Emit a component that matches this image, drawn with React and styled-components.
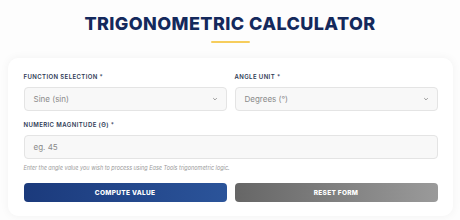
import styled, { createGlobalStyle } from "styled-components";

const GlobalStyle = createGlobalStyle`
  html, body {
    margin: 0;
    padding: 0;
    background: #fdfdfd;
    font-family: "Inter", "Open Sans", sans-serif;
  }
  * {
    box-sizing: border-box;
  }
`;

const Page = styled.div`
  width: 460px;
  height: 220px;
  padding: 0 8px;
  display: flex;
  flex-direction: column;
  align-items: center;
  overflow: hidden;
`;

const Title = styled.h1`
  margin: 12px 0 0;
  font-size: 18px;
  font-weight: 800;
  letter-spacing: 0.4px;
  color: #14295c;
  line-height: 24px;
`;

const Underline = styled.div`
  width: 39px;
  height: 2px;
  border-radius: 1px;
  background: #f6cd5c;
  margin-top: 5px;
`;

const Card = styled.div`
  width: 445px;
  margin-top: 15px;
  background: #ffffff;
  border-radius: 10px;
  box-shadow: 0 0 10px rgba(0, 0, 0, 0.05);
  padding: 14px 15px 14px 16px;
  display: flex;
  flex-direction: column;
`;

const Row = styled.div`
  display: grid;
  grid-template-columns: 1fr 1fr;
  gap: 8px;
`;

const Field = styled.div`
  display: flex;
  flex-direction: column;
  margin-top: ${(p) => (p.$spaced ? "9px" : "0")};
`;

const Label = styled.label`
  font-size: 6px;
  font-weight: 600;
  letter-spacing: 0.4px;
  text-transform: uppercase;
  color: #2e3a55;
  line-height: 10px;
  margin-bottom: 5px;
`;

const Box = styled.div`
  height: 24px;
  background: #f8f8f8;
  border: 1px solid #e4e4e4;
  border-radius: 4px;
  display: flex;
  align-items: center;
  justify-content: space-between;
  padding: 0 8px 0 9px;
  font-size: 8px;
  color: #8a8a8a;
`;

const Chevron = styled.svg`
  width: 6px;
  height: 6px;
`;

const Helper = styled.div`
  font-size: 5.5px;
  font-style: italic;
  color: #9a9a9a;
  margin-top: 5px;
  line-height: 8px;
`;

const Buttons = styled.div`
  display: grid;
  grid-template-columns: 1fr 1fr;
  gap: 8px;
  margin-top: 11px;
`;

const Button = styled.button`
  height: 19px;
  border: none;
  border-radius: 4px;
  font-family: inherit;
  font-size: 6.5px;
  font-weight: 800;
  letter-spacing: 0.3px;
  color: #ffffff;
  background: ${(p) =>
    p.$variant === "reset"
      ? "linear-gradient(90deg, #666666, #9a9a9a)"
      : "linear-gradient(90deg, #1b3a7c, #2b549a)"};
`;

function Select({ value }) {
  return (
    <Box>
      <span>{value}</span>
      <Chevron viewBox="0 0 10 10">
        <path d="M2 3.5 L5 6.5 L8 3.5" fill="none" stroke="#777" strokeWidth="1.2" />
      </Chevron>
    </Box>
  );
}

export default function App() {
  return (
    <>
      <GlobalStyle />
      <Page>
        <Title>TRIGONOMETRIC CALCULATOR</Title>
        <Underline />
        <Card>
          <Row>
            <Field>
              <Label>Function Selection *</Label>
              <Select value="Sine (sin)" />
            </Field>
            <Field>
              <Label>Angle Unit *</Label>
              <Select value="Degrees (°)" />
            </Field>
          </Row>
          <Field $spaced>
            <Label>Numeric Magnitude (Θ) *</Label>
            <Box>eg. 45</Box>
          </Field>
          <Helper>Enter the angle value you wish to process using Ease Tools trigonometric logic.</Helper>
          <Buttons>
            <Button>COMPUTE VALUE</Button>
            <Button $variant="reset">RESET FORM</Button>
          </Buttons>
        </Card>
      </Page>
    </>
  );
}
